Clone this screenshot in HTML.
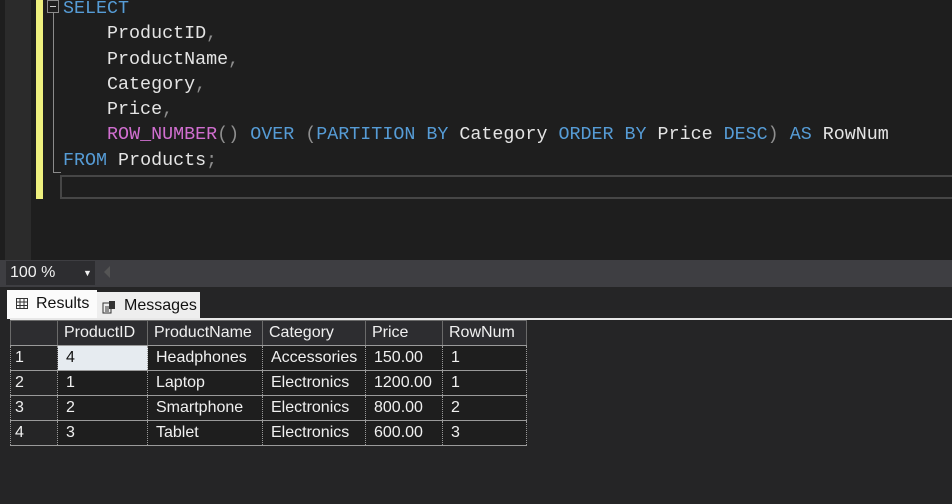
<!DOCTYPE html><html><head><style>
body{margin:0;width:952px;height:504px;background:#1e1e1e;overflow:hidden;position:relative;font-family:"Liberation Sans",sans-serif}
.a{position:absolute}
.code{font-family:"Liberation Mono",monospace;font-size:18.35px;line-height:25.3px;color:#e4e4e4;white-space:pre;left:63px;top:-4px}
.k{color:#569cd6}.f{color:#d16fd0}.g{color:#8e8e8e}
table{border-collapse:collapse;font-size:16px;color:#f0f0f0}
td{height:24px;padding:0 0 0 8px;border:1px dotted #9a9a9a;border-top:1px solid #9a9a9a;border-bottom:1px solid #9a9a9a;background:#1e1e1e}
th{height:24px;font-weight:normal;text-align:left;padding:0 0 0 6px;background:#2d2d30;border:1px solid #6a6a6a;border-bottom:1px solid #9a9a9a}
td.r{padding-left:4px;background:#252526}
</style></head><body>
<div class="a" style="left:5px;top:0;width:26px;height:260px;background:#2b2b2b"></div>
<div class="a" style="left:36px;top:0;width:7px;height:199px;background:#eef07e"></div>
<div class="a" style="left:47px;top:0;width:12px;height:13px;border:1px solid #8a8a8a;box-sizing:border-box"></div>
<div class="a" style="left:50px;top:6px;width:6px;height:1px;background:#ccc"></div>
<div class="a" style="left:53px;top:13px;width:1px;height:160px;background:#8a8a8a"></div>
<div class="a" style="left:53px;top:172px;width:8px;height:1px;background:#8a8a8a"></div>
<div class="a" style="left:60px;top:175px;width:900px;height:24px;border:2px solid #464646;box-sizing:border-box"></div>
<div class="a code"><span class="k">SELECT</span>
    ProductID<span class="g">,</span>
    ProductName<span class="g">,</span>
    Category<span class="g">,</span>
    Price<span class="g">,</span>
    <span class="f">ROW_NUMBER</span><span class="g">()</span> <span class="k">OVER</span> <span class="g">(</span><span class="k">PARTITION BY</span> Category <span class="k">ORDER BY</span> Price <span class="k">DESC</span><span class="g">)</span> <span class="k">AS</span> RowNum
<span class="k">FROM</span> Products<span class="g">;</span></div>
<div class="a" style="left:0;top:260px;width:952px;height:27px;background:#3e3e42"></div>
<div class="a" style="left:6px;top:261px;width:89px;height:24px;background:#2d2d30;color:#f0f0f0;font-size:16px;line-height:24px;padding-left:4px;box-sizing:border-box">100 %<span style="position:absolute;left:77px;top:0;font-size:9px">▼</span></div>
<div class="a" style="left:104px;top:266px;width:0;height:0;border:6px solid transparent;border-right:6px solid #555;border-left:0"></div>
<div class="a" style="left:0;top:287px;width:952px;height:217px;background:#252526"></div>
<div class="a" style="left:7px;top:290px;width:90px;height:29px;background:#fbfbfb;font-size:16px;line-height:27px;color:#111">
<svg class="a" style="left:9px;top:8px" width="12" height="11"><rect x=".5" y=".5" width="11" height="10" fill="none" stroke="#333"/><path d="M0 4h12M0 7.5h12M4 0v11M8 0v11" stroke="#333"/></svg><span class="a" style="left:29px">Results</span></div>
<div class="a" style="left:97px;top:292px;width:103px;height:26px;background:#eeeeee;font-size:16px;line-height:27px;color:#111">
<svg class="a" style="left:5px;top:8px" width="14" height="14"><rect x="1" y="3" width="8" height="10" fill="none" stroke="#333"/><rect x="7" y="1" width="6" height="8" fill="#333"/><path d="M3 7h4M3 9h4M3 11h4" stroke="#333"/></svg><span class="a" style="left:27px">Messages</span></div>
<div class="a" style="left:10px;top:318px;width:942px;height:2px;background:#e8e8e8"></div>
<table class="a" style="left:10px;top:320px">
<tr><th style="width:40px"></th><th style="width:83px">ProductID</th><th style="width:108px">ProductName</th><th style="width:96px">Category</th><th style="width:70px">Price</th><th style="width:77px">RowNum</th></tr>
<tr><td class="r">1</td><td style="background:#e6ebf0;color:#111">4</td><td>Headphones</td><td>Accessories</td><td>150.00</td><td>1</td></tr>
<tr><td class="r">2</td><td>1</td><td>Laptop</td><td>Electronics</td><td>1200.00</td><td>1</td></tr>
<tr><td class="r">3</td><td>2</td><td>Smartphone</td><td>Electronics</td><td>800.00</td><td>2</td></tr>
<tr><td class="r">4</td><td>3</td><td>Tablet</td><td>Electronics</td><td>600.00</td><td>3</td></tr>
</table>
</body></html>
